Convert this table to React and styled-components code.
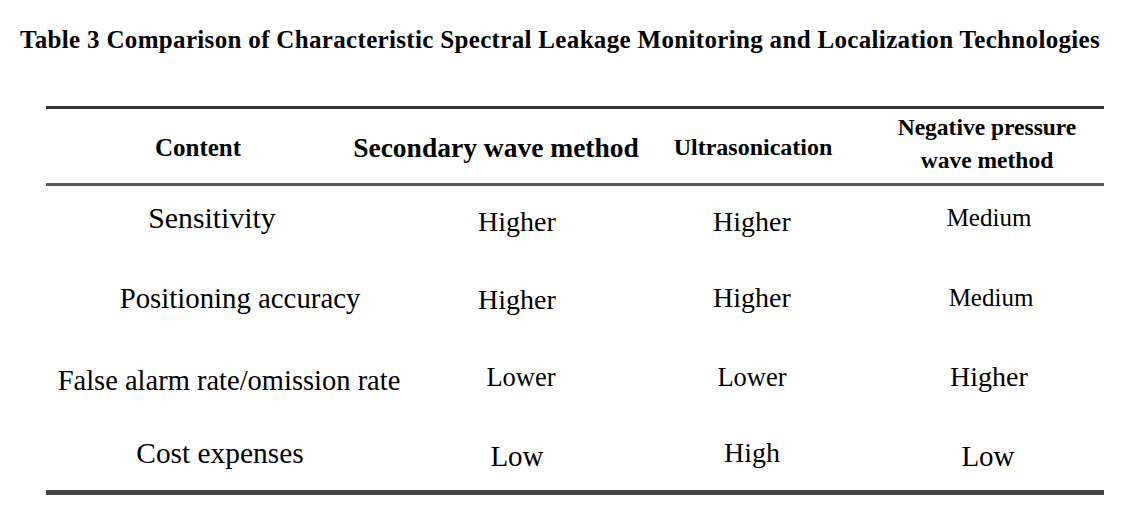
import React from "react";
import styled, { createGlobalStyle } from "styled-components";

const SERIF = `"Liberation Serif", "Times New Roman", Tinos, Times, "Nimbus Roman", "DejaVu Serif", serif`;

const Global = createGlobalStyle`
  html, body { margin: 0; padding: 0; background: #fff; }
  body { font-family: ${SERIF}; color: #000; }
`;

const Page = styled.div`
  width: 1137px;
  height: 517px;
  background: #fff;
  display: flex;
  flex-direction: column;
  align-items: flex-start;
  padding-top: 26px;
  box-sizing: border-box;
  overflow: hidden;
  font-family: ${SERIF};
`;

const Title = styled.h1`
  margin: 0 0 0 20px;
  font-family: ${SERIF};
  font-weight: bold;
  font-size: 25px;
  letter-spacing: 0.33px;
  line-height: 28px;
  white-space: nowrap;
  color: #000;
`;

const Table = styled.div`
  margin: 52px 0 0 46px;
  width: 1058px;
  display: grid;
  grid-template-columns: 352px 238px 232px 236px;
  border-top: 3px solid #333;
  border-bottom: 5px solid #444;
`;

const HeadCell = styled.div`
  height: 74px;
  border-bottom: 3px solid #5a5a5a;
  display: flex;
  align-items: center;
  justify-content: center;
`;

const HeadLabel = styled.div`
  display: flex;
  flex-direction: column;
  align-items: center;
  font-weight: bold;
  font-size: ${(p) => p.$size || 24}px;
  line-height: ${(p) => p.$lh || 30}px;
  white-space: nowrap;
  text-align: center;
  transform: translate(${(p) => p.$dx || 0}px, ${(p) => p.$dy || 0}px);
`;

const Cell = styled.div`
  height: ${(p) => p.$h}px;
  display: flex;
  align-items: center;
  justify-content: center;
`;

const Value = styled.span`
  font-size: ${(p) => p.$size || 28}px;
  white-space: nowrap;
  transform: translate(${(p) => p.$dx || 0}px, ${(p) => p.$dy || 0}px);
`;

const header = [
  { text: ["Content"], size: 25, dx: -24, dy: 2 },
  { text: ["Secondary wave method"], size: 27.5, dx: -21, dy: 2 },
  { text: ["Ultrasonication"], size: 24, dx: 1, dy: 1 },
  { text: ["Negative pressure", "wave method"], size: 23.5, lh: 33, dx: 1, dy: -2 },
];

const rows = [
  {
    h: 72,
    cells: [
      { t: "Sensitivity", size: 29.8, dx: -10, dy: -4 },
      { t: "Higher" },
      { t: "Higher" },
      { t: "Medium", size: 25, dx: 3, dy: -4 },
    ],
  },
  {
    h: 80,
    cells: [
      { t: "Positioning accuracy", size: 28.8, dx: 18 },
      { t: "Higher", dy: 2 },
      { t: "Higher" },
      { t: "Medium", size: 25, dx: 5 },
    ],
  },
  {
    h: 78,
    cells: [
      { t: "False alarm rate/omission rate", size: 28.5, dx: 7, dy: 4 },
      { t: "Lower", size: 26.5, dx: 4 },
      { t: "Lower", size: 26.5 },
      { t: "Higher", dx: 3 },
    ],
  },
  {
    h: 74,
    cells: [
      { t: "Cost expenses", size: 29.4, dx: -2 },
      { t: "Low", size: 29, dy: 3 },
      { t: "High" },
      { t: "Low", size: 29, dx: 2, dy: 3 },
    ],
  },
];

export default function App() {
  return (
    <Page>
      <Global />
      <Title>
        Table 3 Comparison of Characteristic Spectral Leakage Monitoring and
        Localization Technologies
      </Title>
      <Table>
        {header.map((h, i) => (
          <HeadCell key={i}>
            <HeadLabel $size={h.size} $lh={h.lh} $dx={h.dx} $dy={h.dy}>
              {h.text.map((line, j) => (
                <span key={j}>{line}</span>
              ))}
            </HeadLabel>
          </HeadCell>
        ))}
        {rows.map((r, i) =>
          r.cells.map((c, j) => (
            <Cell key={`${i}-${j}`} $h={r.h}>
              <Value $size={c.size} $dx={c.dx} $dy={c.dy}>
                {c.t}
              </Value>
            </Cell>
          ))
        )}
      </Table>
    </Page>
  );
}
